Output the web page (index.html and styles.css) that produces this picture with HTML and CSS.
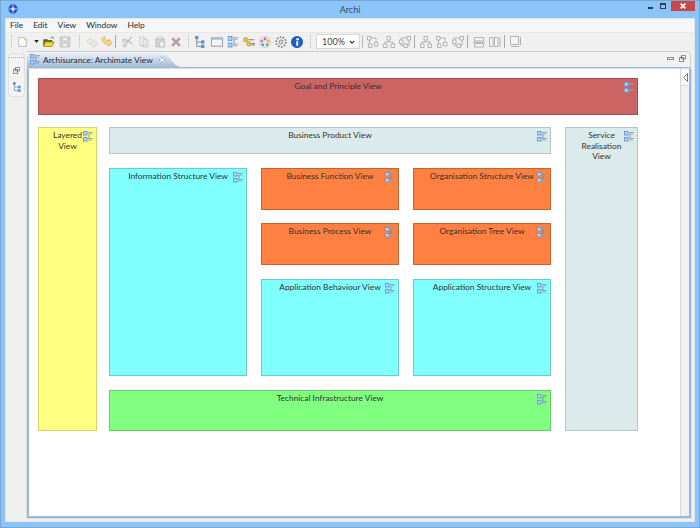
FILE: index.html
```html
<!DOCTYPE html>
<html lang="en">
<head>
<meta charset="utf-8">
<title>Archi</title>
<link rel="stylesheet" href="styles.css">
</head>
<body>
<svg class="defs" width="0" height="0" aria-hidden="true">
  <symbol id="view" viewBox="0 0 10 11">
    <rect x="0.5" y="0.5" width="3.5" height="3.5" fill="#b4daf9" stroke="#6c9ade"/>
    <rect x="0.5" y="6.5" width="3.5" height="3.5" fill="#b4daf9" stroke="#6c9ade"/>
    <path d="M5 1.500h5M5 3h4M5 7.500h5M5 9h4" stroke="#8e9aaa" fill="none" stroke-width="0.8"/>
    <path d="M6 3.500v3.500" stroke="#6a7684" stroke-width="0.7"/>
  </symbol>
  <symbol id="tree" viewBox="0 0 9 11">
    <rect x="0" y="0" width="3" height="3" fill="#5c90d4"/>
    <rect x="5.500" y="4" width="3" height="3" fill="#5c90d4"/>
    <rect x="5.500" y="8" width="3" height="3" fill="#5c90d4"/>
    <path d="M1.500 3v6.500H5.500M1.500 5.500H5.500" stroke="#75818c" fill="none" stroke-width="0.8"/>
  </symbol>
  <symbol id="lay1" viewBox="0 0 12 12">
    <path d="M.5 .5h3.500v3.500H.5zM7.500 6.500H11V10H7.500zM1.500 8H5v3.500H1.500zM2.500 4v4M4 2h5v4.500" fill="#f6f6f6" stroke="#b2b2b2"/>
  </symbol>
  <symbol id="lay2" viewBox="0 0 12 12">
    <path d="M4 .5h3.500V4H4zM.5 8H4v3.500H.5zM8 8h3.500v3.500H8zM5.500 4v2M2 8V6h8v2" fill="#f6f6f6" stroke="#b2b2b2"/>
  </symbol>
  <symbol id="lay3" viewBox="0 0 12 12">
    <path d="M8 .5h3.500V4H8zM.5 4H4v3.500H.5zM5 8h3.500v3.500H5zM8 2H2v2M2 7.500v2h3M10 4v5.500H8.500" fill="#f6f6f6" stroke="#b2b2b2"/>
  </symbol>
</svg>
<div class="window">
  <header class="titlebar">
    <svg class="app-icon" width="10" height="10" viewBox="0 0 14 14"><circle cx="7" cy="7" r="6.500" fill="#2b50c8"/><path d="M7 1v12M1 7h12" stroke="#a9c4f5" stroke-width="1.500"/><circle cx="7" cy="7" r="2.500" fill="#dfe9fb"/></svg>
    <span class="title">Archi</span>
    <div class="caption">
      <span class="cap-min"></span>
      <span class="cap-max"></span>
      <span class="cap-close">
        <svg width="6" height="6" viewBox="0 0 9 9"><path d="M1 1l7 7M8 1L1 8" stroke="#fff" stroke-width="2.500"/></svg>
      </span>
    </div>
  </header>
  <div class="inner">
    <nav class="menubar">
      <span>File</span><span>Edit</span><span>View</span><span>Window</span><span>Help</span>
    </nav>
    <div class="toolbar">
      <i class="grip"></i>
      <svg class="tb new" viewBox="0 0 16 16"><path d="M2.500 1.500h8l3 3v10h-11z" fill="#fdfdf5" stroke="#9aa5b5"/><path d="M11 0l1 2 2 0-1 2 1 2-3-1" fill="#f2c530"/></svg>
      <svg class="arrow" viewBox="0 0 6 4"><path d="M0 0h6L3 4z" fill="#222"/></svg>
      <svg class="tb" viewBox="0 0 16 16"><path d="M1 13V5h5l1 1h5v7z" fill="#6d6a1c" stroke="#4a4710"/><path d="M3 8h12l-3 6H1z" fill="#f4d63a" stroke="#a08a1c"/><path d="M10 3l3-2 1 3" stroke="#3f8a3f" fill="none"/></svg>
      <svg class="tb before-grip" viewBox="0 0 16 16"><path d="M1.500 1.500h13v13h-13z" fill="#d8d8d8" stroke="#b4b4b4"/><path d="M4.500 1.500h7v5h-7zM4.500 9.500h7v5h-7z" fill="#f2f2f2" stroke="#bcbcbc"/></svg>
      <i class="grip g2"></i>
      <svg class="tb undo" viewBox="0 0 16 16"><path d="M1 7l5-5 1 3c3 0 6 2 8 6-2 3-4 4-6 4 2-2 2-5-1-6l-1 3z" fill="#ecece0" stroke="#cfcfc0"/></svg>
      <svg class="tb redo" viewBox="0 0 16 16"><path d="M15 9l-5 5-1-3C5 11 2 8 1 4c0-1 2-3 4-3 0 3 1 5 5 6l0-3z" fill="#f8dc82" stroke="#c6a850"/></svg>
      <i class="sep"></i>
      <svg class="tb" viewBox="0 0 16 16"><path d="M13 1L5 11M6 5l8 6" stroke="#a0a0a0" stroke-width="1.300" fill="none"/><circle cx="3.500" cy="12.500" r="2" fill="none" stroke="#a0a0a0"/><circle cx="3" cy="6" r="1.800" fill="none" stroke="#a0a0a0"/></svg>
      <svg class="tb" viewBox="0 0 16 16"><path d="M2.500 1.500h6l2 2v9h-8zM6.500 4.500h5l2 2v8h-7z" fill="#f3f3f3" stroke="#bcbcbc"/></svg>
      <svg class="tb" viewBox="0 0 16 16"><path d="M2.500 3.500h11v11h-11z" fill="#d6d6d6" stroke="#b0b0b0"/><path d="M5.500 1.500h5v3h-5zM7.500 7.500h6v7h-6z" fill="#f2f2f2" stroke="#b8b8b8"/></svg>
      <svg class="tb before-grip2" viewBox="0 0 16 16"><path d="M3 3l10 10M13 3L3 13" stroke="#b8a0a0" stroke-width="3.500"/></svg>
      <i class="grip g3"></i>
      <svg class="tb tree" viewBox="0 0 9 11"><use href="#tree"/></svg>
      <svg class="tb" viewBox="0 0 16 16"><path d="M.5 2.500h15v11H.5z" fill="#f3f5f8" stroke="#6a7a8c"/><path d="M1 3h14v2H1z" fill="#a7bdd8"/></svg>
      <svg class="tb" viewBox="0 0 10 11"><use href="#view"/></svg>
      <svg class="tb" viewBox="0 0 16 16"><circle cx="3.500" cy="5" r="2.800" fill="#f0c94a" stroke="#a98a20"/><circle cx="8" cy="10.500" r="2.800" fill="#f0c94a" stroke="#a98a20"/><path d="M7 5h8M11 10h5M11 12h5" stroke="#777" stroke-width="1.200"/></svg>
      <svg class="tb" viewBox="0 0 16 16"><circle cx="8" cy="8" r="7.500" fill="#e8e2ea" stroke="#cfcad2"/><circle cx="8" cy="3.800" r="1.800" fill="#e26060"/><circle cx="12.300" cy="6.800" r="1.800" fill="#e8b030"/><circle cx="11" cy="11.800" r="1.800" fill="#5cb85c"/><circle cx="5" cy="11.800" r="1.800" fill="#50a0d0"/><circle cx="3.700" cy="6.800" r="1.800" fill="#c878c8"/></svg>
      <svg class="tb" viewBox="0 0 16 16"><circle cx="8" cy="8" r="2.800" fill="#d8d8d8" stroke="#777"/><circle cx="8" cy="8" r="6.500" fill="none" stroke="#777" stroke-width="2.200" stroke-dasharray="2 2"/></svg>
      <svg class="tb before-grip3" viewBox="0 0 16 16"><circle cx="8" cy="8" r="7.500" fill="#1d5fc5" stroke="#1a52ac"/><circle cx="8.800" cy="4.300" r="1.600" fill="#fff"/><path d="M7 7h2.600v6H7z" fill="#fff"/></svg>
      <i class="grip g4"></i>
      <div class="zoom"><span>100%</span><svg width="6" height="4" viewBox="0 0 8 5"><path d="M1 1l3 3 3-3" stroke="#333" stroke-width="1.500" fill="none"/></svg></div>
      <i class="sep s2"></i>
      <svg class="tb" viewBox="0 0 12 12"><use href="#lay1"/></svg>
      <svg class="tb" viewBox="0 0 12 12"><use href="#lay2"/></svg>
      <svg class="tb last" viewBox="0 0 12 12"><use href="#lay3"/></svg>
      <i class="sep s3"></i>
      <svg class="tb" viewBox="0 0 12 12"><use href="#lay2"/></svg>
      <svg class="tb" viewBox="0 0 12 12"><use href="#lay1"/></svg>
      <svg class="tb last" viewBox="0 0 12 12"><use href="#lay3"/></svg>
      <i class="sep s3"></i>
      <svg class="tb" viewBox="0 0 12 12"><path d="M1.500 1.500h9v3.500h-9zM1.500 7.500h9V11h-9zM0 6.200h12" fill="#f4f4f4" stroke="#b2b2b2"/></svg>
      <svg class="tb last" viewBox="0 0 12 12"><path d="M.5 1.500H4v9H.5zM5.500 1.500H9v9H5.500zM11 1v10" fill="#f4f4f4" stroke="#b2b2b2"/></svg>
      <i class="sep s3"></i>
      <svg class="tb" viewBox="0 0 12 12"><path d="M.5 .5h8v8h-8z" fill="#f4f4f4" stroke="#b2b2b2"/><path d="M10.500 1v8M1 10.500h8" stroke="#b2b2b2"/></svg>
    </div>
    <div class="workbench">
      <aside class="trim">
        <i class="trim-grip"></i>
        <svg width="7" height="7" viewBox="0 0 10 10"><path d="M3.500 .5h6v5h-6zM.5 3.500h6v6h-6z" fill="#f4f4f4" stroke="#555"/></svg>
        <svg width="8" height="10"><use href="#tree"/></svg>
      </aside>
      <section class="editor">
        <div class="tabbar">
          <div class="tab">
            <svg width="10" height="11"><use href="#view"/></svg>
            <span>Archisurance: Archimate View</span>
            <svg class="tab-close" width="8" height="8" viewBox="0 0 11 11"><path d="M2 2l7 7M9 2l-7 7" stroke="#94a0ae" stroke-width="4"/><path d="M2 2l7 7M9 2l-7 7" stroke="#fff" stroke-width="1.800"/></svg>
          </div>
          <div class="tab-actions">
            <span class="tab-min"></span>
            <svg width="7" height="7" viewBox="0 0 10 10"><path d="M3.500 .5h6v5h-6zM.5 3.500h6v6h-6z" fill="#f4f4f4" stroke="#555"/></svg>
          </div>
        </div>
        <div class="editor-body">
          <div class="canvas">
            <div class="node red n-goal"><p>Goal and Principle View</p><svg class="ni"><use href="#view"/></svg></div>
            <div class="node yellow n-layered"><p>Layered<br>View</p><svg class="ni"><use href="#view"/></svg></div>
            <div class="node pale n-product"><p>Business Product View</p><svg class="ni"><use href="#view"/></svg></div>
            <div class="node pale n-service"><p>Service<br>Realisation<br>View</p><svg class="ni"><use href="#view"/></svg></div>
            <div class="node cyan n-info"><p>Information Structure View</p><svg class="ni"><use href="#view"/></svg></div>
            <div class="node orange n-func"><p>Business Function View</p><svg class="ni"><use href="#view"/></svg></div>
            <div class="node orange n-org"><p>Organisation Structure View</p><svg class="ni"><use href="#view"/></svg></div>
            <div class="node orange n-proc"><p>Business Process View</p><svg class="ni"><use href="#view"/></svg></div>
            <div class="node orange n-tree"><p>Organisation Tree View</p><svg class="ni"><use href="#view"/></svg></div>
            <div class="node cyan n-beh"><p>Application Behaviour View</p><svg class="ni"><use href="#view"/></svg></div>
            <div class="node cyan n-app"><p>Application Structure View</p><svg class="ni"><use href="#view"/></svg></div>
            <div class="node green n-tech"><p>Technical Infrastructure View</p><svg class="ni"><use href="#view"/></svg></div>
          </div>
          <div class="palette">
            <div class="palette-top">
              <svg width="5" height="9" viewBox="0 0 5 9"><path d="M4.500 .5v8L.5 4.500z" fill="#fff" stroke="#777"/></svg>
            </div>
          </div>
        </div>
      </section>
    </div>
  </div>
</div>
</body>
</html>
```

FILE: styles.css
```css
* { box-sizing: border-box; }
html, body { margin: 0; padding: 0; }
body {
  width: 700px;
  height: 528px;
  overflow: hidden;
  font-family: Lato, "Open Sans", sans-serif;
  font-size: 8.4px;
  color: #333;
  background: #8ac4f8;
}
.defs { position: absolute; }
.window {
  width: 700px;
  height: 528px;
  display: flex;
  flex-direction: column;
  background: #8ac4f8;
  border: 1px solid #7aa6d0;
}
.titlebar {
  height: 17px;
  flex: none;
  position: relative;
  display: flex;
  align-items: center;
  justify-content: center;
  color: #3c4a5a;
  font-size: 9px;
}
.app-icon { position: absolute; left: 7px; top: 3px; }
.caption {
  position: absolute;
  right: 4px;
  top: 0;
  display: flex;
  align-items: flex-start;
}
.cap-min { width: 5px; height: 2px; background: #2f3c4a; margin: 6px 7px 0 0; }
.cap-max { width: 6px; height: 6px; border: 1px solid #2f3c4a; border-top-width: 2px; margin: 2px 5px 0 0; }
.cap-close {
  width: 24px;
  height: 10px;
  background: #c84846;
  display: flex;
  align-items: center;
  justify-content: center;
}
.inner {
  flex: 1;
  margin: 0 4px 5px 4px;
  background: #f0f0f0;
  border: 1px solid #e4e4e4;
  display: flex;
  flex-direction: column;
  min-height: 0;
}
.menubar {
  height: 13px;
  flex: none;
  background: #f5f6f7;
  display: flex;
  gap: 10px;
  padding-left: 4px;
  line-height: 13px;
  color: #2a2a2a;
}
.toolbar {
  height: 19px;
  flex: none;
  display: flex;
  align-items: center;
  padding: 0 0 1px 5px;
  background: #f0f0f0;
  border-top: 1px solid #e8e8e8;
}
.grip {
  width: 1px;
  height: 13px;
  margin-right: 5px;
  flex: none;
  background: repeating-linear-gradient(#b5b5b5 0 1px, transparent 1px 2px);
}
.tb { flex: none; width: 12px; height: 12px; margin-right: 4px; }
.new { width: 11px; margin-right: 6px; }
.arrow { flex: none; width: 5px; height: 3px; margin-right: 4px; }
.before-grip { margin-right: 8px; }
.g2 { margin-right: 6px; }
.undo { margin-right: 3px; }
.redo { margin-right: 2px; }
.sep { width: 1px; height: 13px; background: #a8a8a8; margin-right: 6px; flex: none; }
.before-grip2 { margin-right: 6px; }
.g3 { margin-right: 6px; }
.tree { width: 10px; height: 12px; margin-right: 6px; }
.before-grip3 { margin-right: 7px; }
.g4 { margin-right: 5px; }
.zoom {
  width: 44px;
  height: 15px;
  background: #fff;
  border: 1px solid #d6d6d6;
  display: flex;
  align-items: center;
  justify-content: space-between;
  padding: 0 4px 0 5px;
  flex: none;
  color: #444;
  font-size: 9px;
}
.s2 { margin: 0 4px 0 2px; background: #bcbcbc; }
.last { margin-right: 3px; }
.s3 { margin-right: 5px; }
.workbench {
  flex: 1;
  display: flex;
  min-height: 0;
}
.trim {
  width: 17px;
  height: 44px;
  flex: none;
  margin: 2px 0 0 2px;
  border: 1px solid #e0e0e0;
  border-radius: 4px;
  display: flex;
  flex-direction: column;
  align-items: center;
  gap: 8px;
  background: #f3f3f3;
}
.trim-grip {
  width: 100%;
  height: 1px;
  margin-top: 3px;
  margin-bottom: 1px;
  background: repeating-linear-gradient(90deg, #a8a8a8 0 1px, transparent 1px 2px);
}
.editor {
  flex: 1;
  margin: 0 3px 3px 2px;
  display: flex;
  flex-direction: column;
  min-width: 0;
}
.tabbar {
  height: 18px;
  flex: none;
  display: flex;
  justify-content: space-between;
  background: #f1f1f1;
  border-top: 1px solid #cdcdcd;
  border-right: 1px solid #cdcdcd;
  border-bottom: 2px solid #9db8d8;
  border-radius: 0 5px 0 0;
}
.tab {
  width: 154px;
  height: 15px;
  background: linear-gradient(#f0f4f9, #a3bcd9);
  display: flex;
  align-items: center;
  padding-left: 3px;
  clip-path: path("M0 4 Q0 0 4 0 L134 0 C142 0 146 15 154 15 L0 15 Z");
  color: #1c2a3a;
}
.tab span { margin-left: 3px; white-space: nowrap; }
.tab-close { margin-left: 5px; flex: none; }
.tab-actions { display: flex; align-items: center; gap: 5px; padding: 0 4px 3px 0; }
.tab-min { width: 7px; height: 3px; border: 1px solid #888; background: #fff; }
.editor-body {
  flex: 1;
  display: flex;
  min-height: 0;
  border: 2px solid #9db8d8;
  border-top: 0;
  background: #fff;
  box-shadow: 0 0 0 1px #dcdcdc;
}
.canvas { flex: 1; position: relative; background: #fff; }
.palette {
  width: 9px;
  flex: none;
  background: #f0f0f0;
  border-left: 1px solid #d8d8d8;
}
.palette-top {
  height: 17px;
  background: #f8f8f8;
  border-bottom: 1px solid #d8d8d8;
  display: flex;
  justify-content: center;
  align-items: center;
}
.node {
  position: absolute;
  border: 1px solid #888;
  padding-top: 2px;
  line-height: 10.5px;
  text-align: center;
  color: #333;
}
.node p { margin: 0; white-space: nowrap; }
.ni { position: absolute; top: 3px; right: 3px; width: 10px; height: 11px; }
.red { background: #cc6464; border-color: #a84e50; }
.yellow { background: #ffff80; border-color: #d4d46c; }
.pale { background: #dbeaea; border-color: #b6c4c4; }
.cyan { background: #80ffff; border-color: #6ccccc; }
.orange { background: #ff8040; border-color: #c46530; }
.green { background: #80ff80; border-color: #66cc66; }
.n-goal { left: 9px; top: 9px; width: 600px; height: 37px; }
.n-layered { left: 9px; top: 58px; width: 59px; height: 304px; }
.n-product { left: 80px; top: 58px; width: 442px; height: 27px; }
.n-service { left: 536px; top: 58px; width: 73px; height: 304px; }
.n-info { left: 80px; top: 99px; width: 138px; height: 208px; }
.n-func { left: 232px; top: 99px; width: 138px; height: 42px; }
.n-org { left: 384px; top: 99px; width: 138px; height: 42px; }
.n-proc { left: 232px; top: 154px; width: 138px; height: 42px; }
.n-tree { left: 384px; top: 154px; width: 138px; height: 42px; }
.n-beh { left: 232px; top: 210px; width: 138px; height: 97px; }
.n-app { left: 384px; top: 210px; width: 138px; height: 97px; }
.n-tech { left: 80px; top: 321px; width: 442px; height: 41px; }
```
